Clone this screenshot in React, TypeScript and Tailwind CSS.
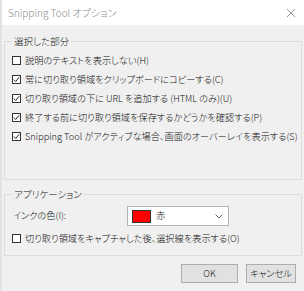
import React from 'react'

const font = "font-['Noto_Sans_CJK_JP','Noto_Sans',sans-serif] [font-feature-settings:'palt'] font-light"

function Check({ checked }: { checked?: boolean }) {
  return (
    <span className="w-[9px] h-[9px] border border-[#333] bg-white flex items-center justify-center shrink-0">
      {checked && (
        <svg width="7" height="7" viewBox="0 0 7 7">
          <path d="M0.8 3.6 L2.7 5.5 L6.2 1.2" stroke="#222" strokeWidth="1" fill="none" />
        </svg>
      )}
    </span>
  )
}

function Row({ label, checked }: { label: string; checked?: boolean }) {
  return (
    <div className="h-[19px] flex items-center gap-[4px] pl-[7px]">
      <Check checked={checked} />
      <span className="text-[9.2px] leading-none text-[#111] whitespace-nowrap">{label}</span>
    </div>
  )
}

export default function App() {
  const opts = [
    { label: '説明のテキストを表示しない(H)', checked: false },
    { label: '常に切り取り領域をクリップボードにコピーする(C)', checked: true },
    { label: '切り取り領域の下に URL を追加する (HTML のみ)(U)', checked: true },
    { label: '終了する前に切り取り領域を保存するかどうかを確認する(P)', checked: true },
    { label: 'Snipping Tool がアクティブな場合、画面のオーバーレイを表示する(S)', checked: true },
  ]

  return (
    <div className={`w-[304px] h-[291px] bg-[#f0f0f0] border-l-2 border-[#e2e2e2] flex flex-col ${font}`}>
      <div className="h-[25px] bg-white flex items-center justify-between pl-[6px] pr-[8px]">
        <span className="text-[10px] text-[#8c8c8c]">Snipping Tool オプション</span>
        <svg width="10" height="10" viewBox="0 0 10 10">
          <path d="M1 1 L9 9 M9 1 L1 9" stroke="#8a8a8a" strokeWidth="0.9" />
        </svg>
      </div>

      <div className="flex-1 flex flex-col px-[2px] pt-[10px]">
        <fieldset className="border border-[#dcdcdc] h-[145px] pt-[4px]">
          <legend className="ml-[7px] px-[2px] text-[9.5px] leading-[12px] text-[#111]">選択した部分</legend>
          {opts.map((o, i) => (
            <Row key={i} label={o.label} checked={o.checked} />
          ))}
        </fieldset>

        <fieldset className="border border-[#dcdcdc] h-[68px] mt-[8px]">
          <legend className="ml-[7px] px-[2px] text-[9.5px] leading-[12px] text-[#111]">アプリケーション</legend>
          <div className="h-[27px] flex items-center pl-[8px] pt-[5px]">
            <span className="w-[114px] text-[9.2px] text-[#111]">インクの色(I):</span>
            <div className="w-[102px] h-[20px] bg-white border border-[#b4b4b4] flex items-center pl-[4px] pr-[5px]">
              <span className="w-[19px] h-[13px] bg-[#ff0000] border border-[#333]" />
              <span className="ml-[5px] text-[9.2px] text-[#111]">赤</span>
              <svg className="ml-auto" width="8" height="5" viewBox="0 0 8 5">
                <path d="M0.5 0.5 L4 4 L7.5 0.5" stroke="#555" strokeWidth="0.9" fill="none" />
              </svg>
            </div>
          </div>
          <div className="mt-[2px]">
            <Row label="切り取り領域をキャプチャした後、選択線を表示する(O)" />
          </div>
        </fieldset>

        <div className="flex justify-end gap-[8px] mt-[8px] pr-[6px]">
          <button className="w-[57px] h-[19px] bg-[#e1e1e1] border border-[#adadad] text-[9.2px] text-[#111]">OK</button>
          <button className="w-[50px] h-[19px] bg-[#e1e1e1] border border-[#adadad] text-[9.2px] text-[#111]">キャンセル</button>
        </div>
      </div>
    </div>
  )
}
